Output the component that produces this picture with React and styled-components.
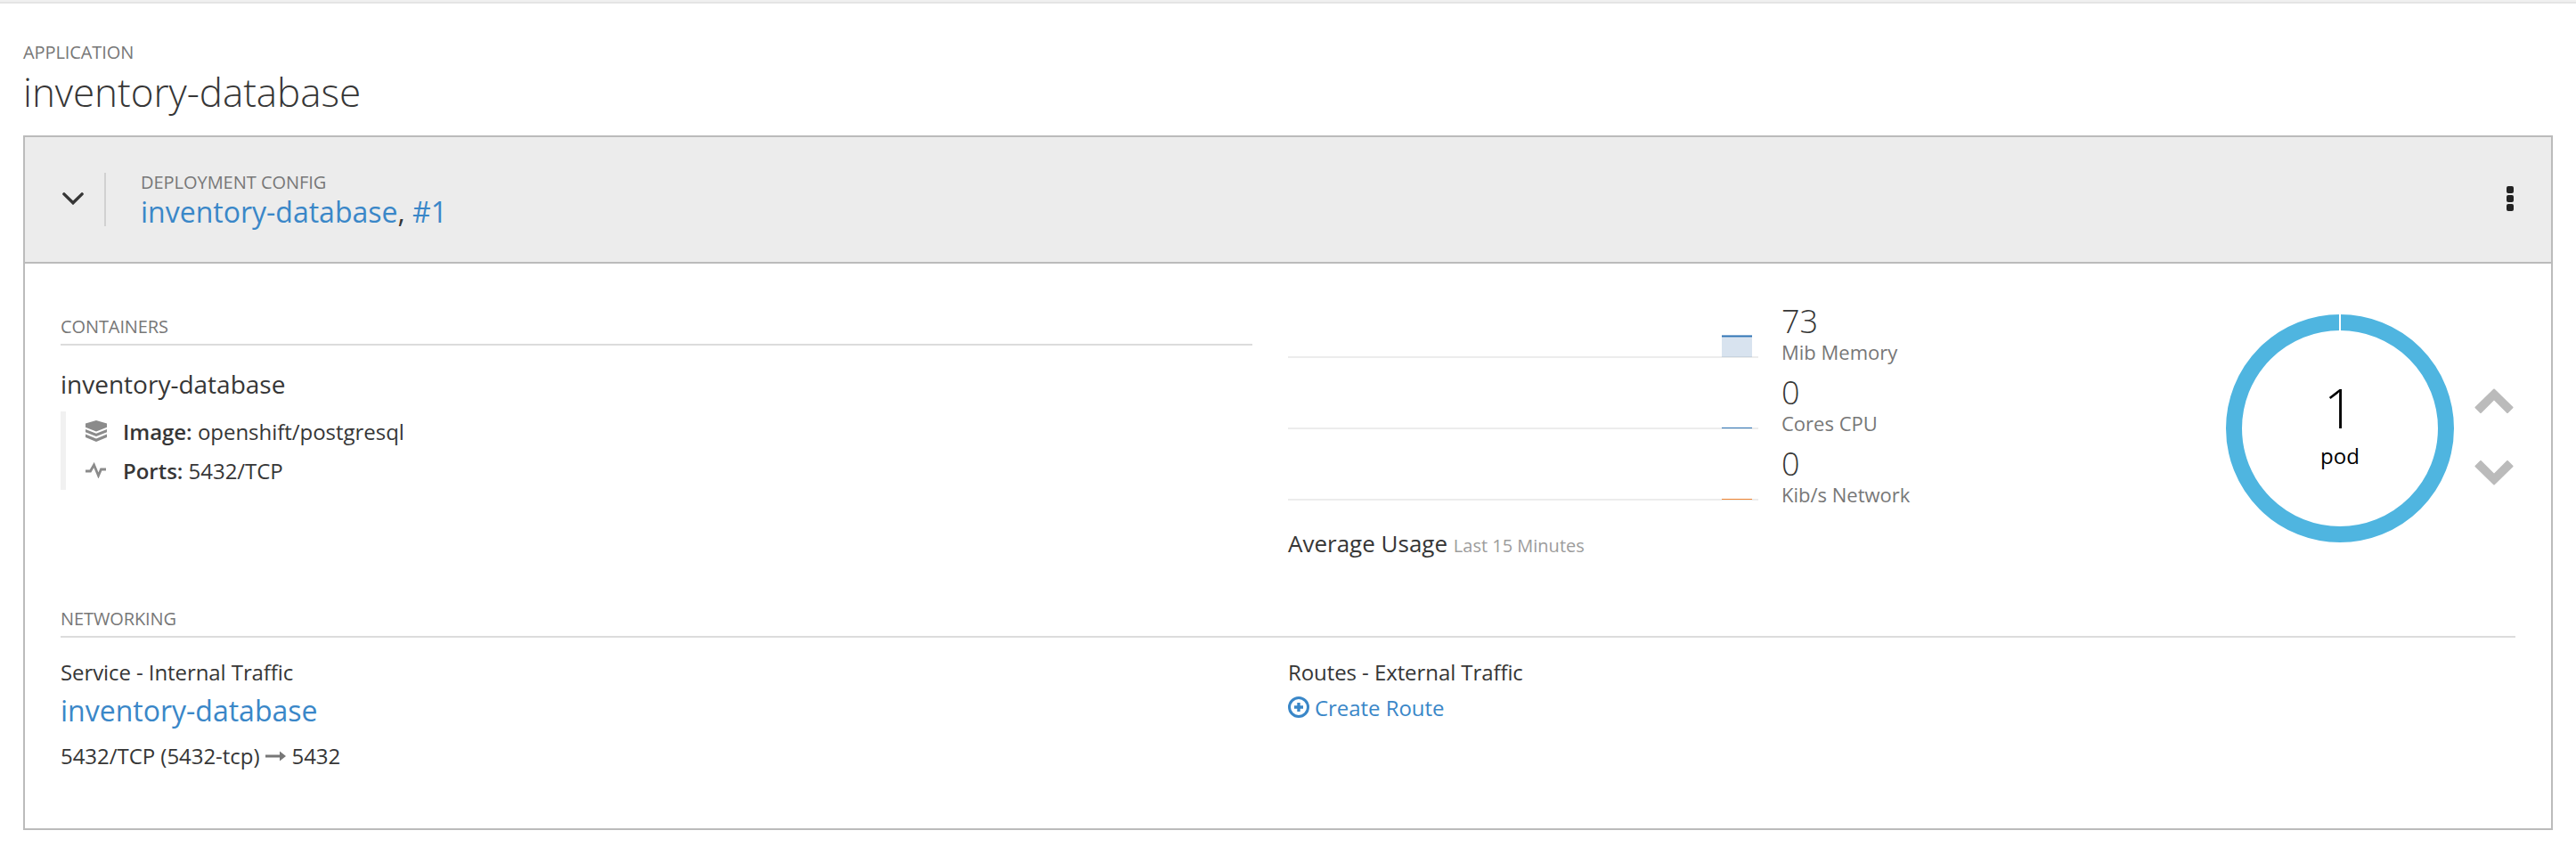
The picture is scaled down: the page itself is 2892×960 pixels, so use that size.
import React from "react";
import styled, { createGlobalStyle } from "styled-components";

const Global = createGlobalStyle`
  body { margin: 0; background: #fff; color: #363636; font-family: "Open Sans", "Liberation Sans", sans-serif; }
  svg { display: block; flex: none; }
`;
const TopStrip = styled.div`
  height: 2px;
  background: #f0f0f0;
  border-bottom: 2px solid #e4e4e4;
`;
const Page = styled.main`padding: 41px 26px 0;`;
const Overline = styled.div`
  font-size: 20px;
  line-height: ${(p) => p.$line || 24}px;
  letter-spacing: ${(p) => p.$spacing || "-0.1px"};
  color: #777;
  text-transform: uppercase;
`;
const Title = styled.h1`
  margin: 4px 0 23px;
  font-size: 44px;
  line-height: 52px;
  font-weight: 300;
  letter-spacing: -0.05px;
`;
const Card = styled.section`
  box-sizing: border-box;
  height: 780px;
  border: 2px solid #bbb;
  box-shadow: 0 2px 0 #ddd;
`;
const CardHeader = styled.header`
  display: flex;
  align-items: center;
  height: 140px;
  padding: 0 42px;
  background: #ececec;
  border-bottom: 2px solid #bbb;
`;
const Toggle = styled.div`padding-bottom: 3px;`;
const Divider = styled.div`
  width: 2px;
  height: 60px;
  margin: 0 39px 0 23px;
  background: #d1d1d1;
`;
const HeaderText = styled.div`
  flex: 1;
  padding-top: 3px;
`;
const Link = styled.a`color: #3a87c8;`;
const BigLine = styled.div`
  margin-top: ${(p) => p.$top}px;
  font-size: 32px;
  line-height: 40px;
`;
const Kebab = styled.div`
  display: flex;
  flex-direction: column;
  gap: 2.4px;
  margin-top: -2px;
`;
const Dot = styled.span`
  width: 8px;
  height: 8px;
  border-radius: 2px;
  background: #232323;
`;
const Body = styled.div`padding: 0 40px;`;
const Columns = styled.div`
  display: grid;
  grid-template-columns: 1fr 1fr;
  height: ${(p) => p.$height};
`;
const Containers = styled.div`padding: 58px 40px 0 0;`;
const SectionHead = styled(Overline)`
  padding: 1px 0 7px;
  border-bottom: 2px solid #dcdcdc;
`;
const ContainerName = styled.div`
  margin: 25px 0 13px;
  font-size: 28px;
  line-height: 36px;
`;
const Details = styled.div`
  border-left: 6px solid #f1f1f1;
  padding: 1px 0 0 22px;
  height: 87px;
`;
const Detail = styled.div`
  display: flex;
  gap: 18px;
  font-size: 24px;
  line-height: 44px;
  letter-spacing: -0.03px;
`;
const DetailIcon = styled.span`
  width: 24px;
  padding-top: ${(p) => p.$top}px;
`;
const Strong = styled.b`font-weight: 600;`;
const Usage = styled.div`
  display: flex;
  justify-content: space-between;
`;
const Metrics = styled.div`padding-top: 44px;`;
const Metric = styled.div`
  display: flex;
  gap: 26px;
  height: 80px;
`;
const Value = styled.div`
  padding-top: 1px;
  font-size: 36px;
  line-height: 40px;
  font-weight: 300;
`;
const Unit = styled.div`
  font-size: 22px;
  line-height: 28px;
  color: #777;
`;
const Average = styled.div`
  margin-top: 12px;
  font-size: 26px;
  line-height: 36px;
`;
const Period = styled.span`
  font-size: 20px;
  color: #9c9c9c;
`;
const Pods = styled.div`
  display: flex;
  gap: 23px;
  padding: 57px 2px 0 0;
`;
const Scaler = styled.div`
  display: flex;
  flex-direction: column;
  gap: 53px;
  padding-top: 83px;
`;
const Traffic = styled.div`
  padding-top: 23px;
  font-size: 24px;
  line-height: 32px;
`;
const TrafficTitle = styled.div`letter-spacing: -0.08px;`;
const PortLine = styled.div`
  display: flex;
  align-items: center;
  gap: 6px;
  margin-top: 15px;
  letter-spacing: -0.04px;
`;
const CreateRoute = styled(Link)`
  display: flex;
  align-items: center;
  gap: 6px;
  margin-top: 8px;
  letter-spacing: -0.05px;
`;
const PlusIcon = styled.span`margin-top: -2px;`;

const ChevronDown = () => (
  <svg width="24" height="14" viewBox="0 0 24 14" fill="none" stroke="#363636" strokeWidth="3.4" strokeLinecap="round" strokeLinejoin="miter">
    <path d="M1.9 1.9 12 11.8 22.1 1.9" />
  </svg>
);
const Layers = () => (
  <svg width="24" height="24" viewBox="0 0 24 24" fill="#8b8b8b">
    <path d="M12 0 24 3.500v4.300L12 12.600 0 7.800V3.500Z" />
    <path d="M0 10l12 4.800L24 10v3.200l-12 4.800-12-4.800Z" />
    <path d="M0 15.600l12 4.800 12-4.800v3.300L12 24 0 18.900Z" />
  </svg>
);
const Pulse = () => (
  <svg width="24" height="18" viewBox="0 0 24 18" fill="none" stroke="#8b8b8b" strokeWidth="2.800">
    <path d="M0 10h5.500L9.500 3l5 12L17.500 8H23" />
  </svg>
);
const Arrow = () => (
  <svg width="24" height="12" viewBox="0 0 24 12" fill="#777">
    <path d="M1 4.500h16V0.500L24 6l-7 5.500V7.500H1Z" />
  </svg>
);
const PlusCircle = () => (
  <svg width="24" height="24" viewBox="0 0 24 24" fill="none" stroke="#3a87c8">
    <circle cx="12" cy="12" r="10.500" strokeWidth="3" />
    <path d="M12 7v10M7 12h10" strokeWidth="3.400" />
  </svg>
);
const ScaleArrow = ({ down }) => (
  <svg width="44" height="28" viewBox="0 0 44 28" fill="#bbb" stroke="#bbb" strokeWidth="2" strokeLinejoin="round">
    <path
      transform={down ? "matrix(1 0 0 -1 0 28)" : undefined}
      d="M22 1.500 42.500 21.500 37 27 22 12 7 27 1.500 21.500Z"
    />
  </svg>
);
const Spark = ({ level, color }) => (
  <svg width="528" height="62" viewBox="0 0 528 62">
    <rect y="60" width="528" height="2" fill="#ececec" />
    {level > 0 && <rect x="487" y={61 - level} width="34" height={level} fill="#3a74ad" fillOpacity="0.2" />}
    {level > 0 && <rect x="487" y={60 - level - 1} width="34" height="3" fill="#8fb2d6" />}
    <rect x="487" y={60 - level} width="34" height="1" fill={color} />
  </svg>
);
const Donut = () => (
  <svg width="256" height="256" viewBox="0 0 256 256">
    <circle cx="128" cy="128" r="119" fill="none" stroke="#4fb5e0" strokeWidth="18" />
    <rect x="127" y="0" width="2" height="20" fill="#fff" />
    <text x="127" y="128" textAnchor="middle" fontSize="60" fontWeight="300">1</text>
    <text x="128" y="167.700" textAnchor="middle" fontSize="24">pod</text>
  </svg>
);

const metrics = [
  { value: 73, unit: "Mib Memory", level: 23, color: "#2f75b5" },
  { value: 0, unit: "Cores CPU", level: 0, color: "#2f75b5" },
  { value: 0, unit: "Kib/s Network", level: 0, color: "#ef8534" },
];

export default function App() {
  return (
    <>
      <Global />
      <TopStrip />
      <Page>
        <Overline $line={28}>Application</Overline>
        <Title>inventory-database</Title>
        <Card>
          <CardHeader>
            <Toggle><ChevronDown /></Toggle>
            <Divider />
            <HeaderText>
              <Overline $spacing="-0.03px">Deployment Config</Overline>
              <BigLine $top={1}>
                <Link>inventory-database</Link>, <Link>#1</Link>
              </BigLine>
            </HeaderText>
            <Kebab>
              <Dot />
              <Dot />
              <Dot />
            </Kebab>
          </CardHeader>
          <Body>
            <Columns $height="386px">
              <Containers>
                <SectionHead>Containers</SectionHead>
                <ContainerName>inventory-database</ContainerName>
                <Details>
                  <Detail>
                    <DetailIcon $top={9}><Layers /></DetailIcon>
                    <span><Strong>Image:</Strong> openshift/postgresql</span>
                  </Detail>
                  <Detail>
                    <DetailIcon $top={12}><Pulse /></DetailIcon>
                    <span><Strong>Ports:</Strong> 5432/TCP</span>
                  </Detail>
                </Details>
              </Containers>
              <Usage>
                <Metrics>
                  {metrics.map((m) => (
                    <Metric key={m.unit}>
                      <Spark level={m.level} color={m.color} />
                      <div>
                        <Value>{m.value}</Value>
                        <Unit>{m.unit}</Unit>
                      </div>
                    </Metric>
                  ))}
                  <Average>Average Usage <Period>Last 15 Minutes</Period></Average>
                </Metrics>
                <Pods>
                  <Donut />
                  <Scaler>
                    <ScaleArrow />
                    <ScaleArrow down />
                  </Scaler>
                </Pods>
              </Usage>
            </Columns>
            <SectionHead>Networking</SectionHead>
            <Columns $height="auto">
              <Traffic>
                <TrafficTitle>Service - Internal Traffic</TrafficTitle>
                <BigLine $top={7}><Link>inventory-database</Link></BigLine>
                <PortLine><span>5432/TCP (5432-tcp)</span><Arrow /><span>5432</span></PortLine>
              </Traffic>
              <Traffic>
                <TrafficTitle>Routes - External Traffic</TrafficTitle>
                <CreateRoute><PlusIcon><PlusCircle /></PlusIcon>Create Route</CreateRoute>
              </Traffic>
            </Columns>
          </Body>
        </Card>
      </Page>
    </>
  );
}
